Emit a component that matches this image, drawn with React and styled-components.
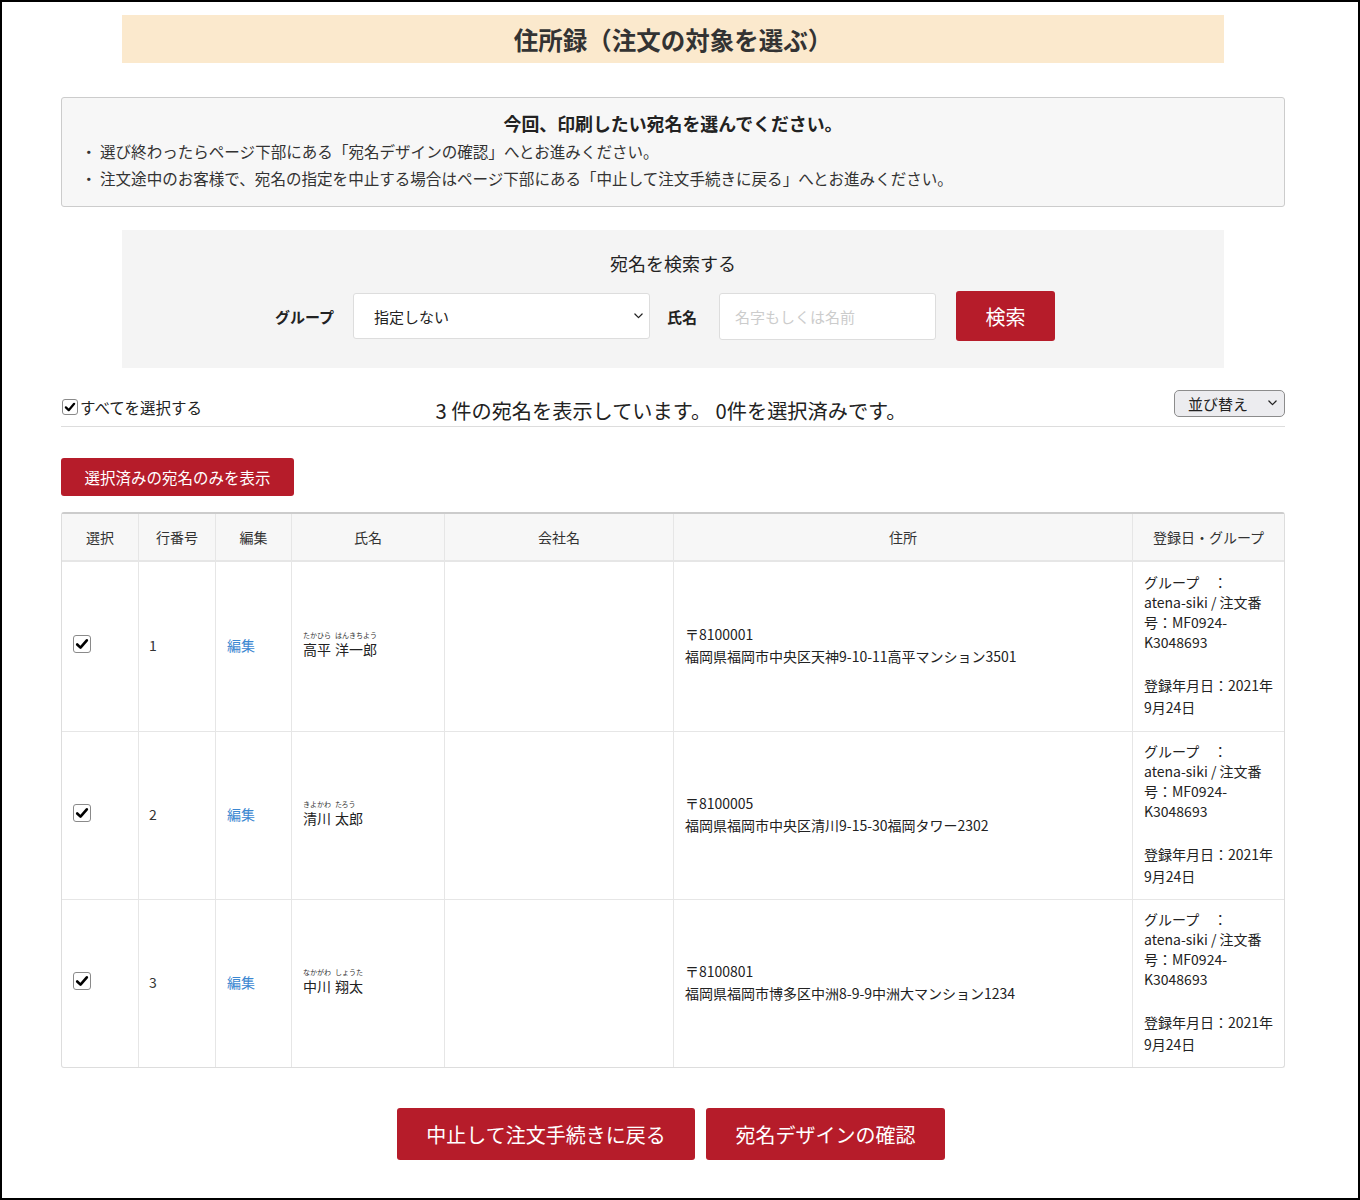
import React from 'react'
import styled, { createGlobalStyle } from 'styled-components'

const GlobalStyle = createGlobalStyle`
  html, body {
    margin: 0;
    padding: 0;
    background: #fff;
  }
  body {
    font-family: "Noto Sans CJK JP", "Noto Sans", sans-serif;
    color: #333;
  }
  * {
    box-sizing: border-box;
  }
`

const Frame = styled.div`
  width: 1360px;
  height: 1200px;
  border: 2px solid #000;
  background: #fff;
  padding: 13px 0 0 59px;
`

const Content = styled.div`
  width: 1224px;
`

const TitleBar = styled.h1`
  margin: 0 61px;
  height: 48px;
  background: #fbe9cd;
  display: flex;
  align-items: center;
  justify-content: center;
  font-size: 24.5px;
  font-weight: 700;
  color: #333;
`

const InfoBox = styled.div`
  margin-top: 34px;
  height: 110px;
  background: #f7f7f7;
  border: 1px solid #ccc;
  border-radius: 3px;
  padding: 12px 23px 0;
`

const InfoHeading = styled.p`
  margin: 0 0 2px;
  text-align: center;
  font-size: 17.9px;
  font-weight: 700;
  line-height: 26px;
  color: #222;
`

const InfoLine = styled.p`
  margin: 0;
  display: flex;
  font-size: 15.55px;
  line-height: 27px;
  color: #333;
`

const Bullet = styled.span`
  width: 19px;
  margin-left: -4px;
  flex-shrink: 0;
`

const SearchBox = styled.div`
  margin: 23px 61px 0;
  height: 138px;
  background: #f4f4f4;
  padding-top: 20px;
`

const SearchTitle = styled.div`
  text-align: center;
  font-size: 18px;
  line-height: 26px;
  color: #222;
`

const SearchRow = styled.div`
  margin-top: 15px;
  display: flex;
  align-items: center;
  justify-content: center;
  padding-right: 16px;
`

const FieldLabel = styled.span`
  font-size: 15px;
  font-weight: 700;
  color: #222;
  margin-right: ${p => p.gap}px;
`

const SelectBox = styled.div`
  position: relative;
  width: ${p => p.w}px;
  height: ${p => p.h}px;
  display: flex;
  align-items: center;
  padding-left: ${p => p.pl}px;
  font-size: 15px;
  color: #222;
  background: ${p => p.bg};
  border: 1px solid ${p => p.bc};
  border-radius: ${p => p.r}px;
  margin-right: ${p => p.mr || 0}px;
`

const Chevron = styled.svg`
  position: absolute;
  right: ${p => p.right}px;
  top: 50%;
  transform: translateY(-50%);
`

const TextInput = styled.input`
  width: 217px;
  height: 47px;
  border: 1px solid #ddd;
  border-radius: 3px;
  background: #fff;
  padding: 0 15px;
  font-family: inherit;
  font-size: 15px;
  margin-right: 20px;
  &::placeholder {
    color: #ccc;
  }
`

const RedButton = styled.button`
  background: #b61c2a;
  color: #fff;
  border: none;
  border-radius: 3px;
  font-family: inherit;
  font-size: ${p => p.fs}px;
  width: ${p => p.w}px;
  height: ${p => p.h}px;
  padding: 0;
  cursor: pointer;
`

const StatusRow = styled.div`
  margin-top: 20px;
  height: 39px;
  display: grid;
  grid-template-columns: 1fr auto 1fr;
  align-items: center;
  border-bottom: 1px solid #ddd;
`

const CheckLabel = styled.label`
  display: flex;
  align-items: center;
  gap: 2px;
  font-size: 15.5px;
  color: #222;
  margin-left: 1px;
`

const CheckBox = styled.span`
  width: ${p => p.size}px;
  height: ${p => p.size}px;
  display: inline-flex;
  align-items: center;
  justify-content: center;
  background: #fff;
  border: 1px solid #8a8a8a;
  border-radius: 3px;
  flex-shrink: 0;
`

const StatusText = styled.div`
  font-size: 20.2px;
  color: #222;
  padding-top: 6px;
  margin-right: 4px;
`

const SortWrap = styled.div`
  display: flex;
  justify-content: flex-end;
  margin-top: -8px;
`

const FilterWrap = styled.div`
  margin-top: 31px;
`

const Table = styled.table`
  margin-top: 16px;
  width: 1224px;
  border-collapse: separate;
  border-spacing: 0;
  table-layout: fixed;
  border: 1px solid #ddd;
  border-top: 2px solid #ccc;
  border-radius: 3px;
  font-size: 14px;
  color: #333;
`

const Th = styled.th`
  height: 48px;
  padding: 0;
  background: #f7f7f7;
  font-weight: 400;
  text-align: center;
  border-bottom: 2px solid #e6e6e6;
  border-left: ${p => (p.first ? 'none' : '1px solid #e6e6e6')};
`

const Td = styled.td`
  height: ${p => p.h}px;
  vertical-align: middle;
  padding: 0 ${p => p.pr || 8}px 3px ${p => p.pl || 11}px;
  border-left: ${p => (p.first ? 'none' : '1px solid #e6e6e6')};
  border-top: ${p => (p.top ? '1px solid #e6e6e6' : 'none')};
`

const EditLink = styled.a`
  color: #3b87d1;
  text-decoration: none;
`

const Name = styled.div`
  display: flex;
  gap: 4px;
  color: #222;
  margin-top: -3px;
`

const NamePart = styled.span`
  display: inline-flex;
  flex-direction: column;
  align-items: flex-start;
`

const Kana = styled.span`
  font-size: 7px;
  line-height: 10px;
  color: #333;
  white-space: nowrap;
`

const Kanji = styled.span`
  font-size: 14px;
  line-height: 18px;
  white-space: nowrap;
`

const AddressBlock = styled.div`
  line-height: 22px;
  color: #222;
`

const GroupBlock = styled.div`
  line-height: ${p => p.lh}px;
  margin-top: ${p => p.mt || 0}px;
  white-space: nowrap;
  color: #222;
`

const Actions = styled.div`
  margin-top: 40px;
  display: flex;
  justify-content: center;
  gap: 11px;
  padding-right: 4px;
`

const Check = ({ size }) => (
  <CheckBox size={size}>
    <svg width={size - 4} height={size - 4} viewBox="0 0 16 16">
      <path d="M2.5 8.5 L6.3 12.2 L13.5 3.8" fill="none" stroke="#000" strokeWidth="3" strokeLinecap="round" strokeLinejoin="round" />
    </svg>
  </CheckBox>
)

const ChevronIcon = ({ right, w = 10 }) => (
  <Chevron right={right} width={w} height={w * 0.65} viewBox="0 0 10 6.5">
    <path d="M1 1 L5 5 L9 1" fill="none" stroke="#222" strokeWidth="1.4" strokeLinecap="round" strokeLinejoin="round" />
  </Chevron>
)

const rows = [
  {
    no: 1,
    sei: '高平', seiKana: 'たかひら',
    mei: '洋一郎', meiKana: 'はんきちよう',
    zip: '〒8100001',
    addr: '福岡県福岡市中央区天神9-10-11高平マンション3501',
    h: 169,
  },
  {
    no: 2,
    sei: '清川', seiKana: 'きよかわ',
    mei: '太郎', meiKana: 'たろう',
    zip: '〒8100005',
    addr: '福岡県福岡市中央区清川9-15-30福岡タワー2302',
    h: 168,
  },
  {
    no: 3,
    sei: '中川', seiKana: 'なかがわ',
    mei: '翔太', meiKana: 'しょうた',
    zip: '〒8100801',
    addr: '福岡県福岡市博多区中洲8-9-9中洲大マンション1234',
    h: 168,
  },
]

const columns = [
  { label: '選択', w: 76 },
  { label: '行番号', w: 77 },
  { label: '編集', w: 76 },
  { label: '氏名', w: 153 },
  { label: '会社名', w: 229 },
  { label: '住所', w: 459 },
  { label: '登録日・グループ', w: 152 },
]

export default function App() {
  return (
    <>
      <GlobalStyle />
      <Frame>
        <Content>
          <TitleBar>住所録（注文の対象を選ぶ）</TitleBar>

          <InfoBox>
            <InfoHeading>今回、印刷したい宛名を選んでください。</InfoHeading>
            <InfoLine>
              <Bullet>・</Bullet>
              選び終わったらページ下部にある「宛名デザインの確認」へとお進みください。
            </InfoLine>
            <InfoLine>
              <Bullet>・</Bullet>
              注文途中のお客様で、宛名の指定を中止する場合はページ下部にある「中止して注文手続きに戻る」へとお進みください。
            </InfoLine>
          </InfoBox>

          <SearchBox>
            <SearchTitle>宛名を検索する</SearchTitle>
            <SearchRow>
              <FieldLabel gap={19}>グループ</FieldLabel>
              <SelectBox w={297} h={46} pl={20} bg="#fff" bc="#ddd" r={3} mr={17}>
                指定しない
                <ChevronIcon right={6} w={9} />
              </SelectBox>
              <FieldLabel gap={22}>氏名</FieldLabel>
              <TextInput placeholder="名字もしくは名前" />
              <RedButton w={99} h={50} fs={20}>検索</RedButton>
            </SearchRow>
          </SearchBox>

          <StatusRow>
            <CheckLabel>
              <Check size={16} />
              すべてを選択する
            </CheckLabel>
            <StatusText>3 件の宛名を表示しています。 0件を選択済みです。</StatusText>
            <SortWrap>
              <SelectBox w={111} h={27} pl={13} bg="#ececef" bc="#8c8c8c" r={5}>
                並び替え
                <ChevronIcon right={7} w={9} />
              </SelectBox>
            </SortWrap>
          </StatusRow>

          <FilterWrap>
            <RedButton w={233} h={38} fs={15.5}>選択済みの宛名のみを表示</RedButton>
          </FilterWrap>

          <Table>
            <colgroup>
              {columns.map(c => (
                <col key={c.label} style={{ width: c.w }} />
              ))}
            </colgroup>
            <thead>
              <tr>
                {columns.map((c, i) => (
                  <Th key={c.label} first={i === 0}>{c.label}</Th>
                ))}
              </tr>
            </thead>
            <tbody>
              {rows.map((r, i) => (
                <tr key={r.no}>
                  <Td first h={r.h} top={i > 0}>
                    <Check size={18} />
                  </Td>
                  <Td h={r.h} top={i > 0} pl={10}>{r.no}</Td>
                  <Td h={r.h} top={i > 0}>
                    <EditLink href="#">編集</EditLink>
                  </Td>
                  <Td h={r.h} top={i > 0}>
                    <Name>
                      <NamePart>
                        <Kana>{r.seiKana}</Kana>
                        <Kanji>{r.sei}</Kanji>
                      </NamePart>
                      <NamePart>
                        <Kana>{r.meiKana}</Kana>
                        <Kanji>{r.mei}</Kanji>
                      </NamePart>
                    </Name>
                  </Td>
                  <Td h={r.h} top={i > 0} />
                  <Td h={r.h} top={i > 0}>
                    <AddressBlock>
                      {r.zip}
                      <br />
                      {r.addr}
                    </AddressBlock>
                  </Td>
                  <Td h={r.h} top={i > 0} pr={4}>
                    <GroupBlock lh={20}>
                      グループ　：<br />
                      atena-siki / 注文番<br />
                      号：MF0924-<br />
                      K3048693
                    </GroupBlock>
                    <GroupBlock lh={22} mt={22}>
                      登録年月日：2021年<br />
                      9月24日
                    </GroupBlock>
                  </Td>
                </tr>
              ))}
            </tbody>
          </Table>

          <Actions>
            <RedButton w={298} h={52} fs={20}>中止して注文手続きに戻る</RedButton>
            <RedButton w={239} h={52} fs={20}>宛名デザインの確認</RedButton>
          </Actions>
        </Content>
      </Frame>
    </>
  )
}
